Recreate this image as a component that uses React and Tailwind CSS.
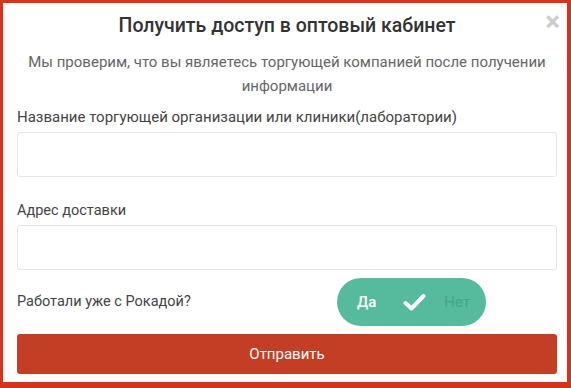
import React, { useState } from 'react';

function App() {
  const [worked, setWorked] = useState(true);

  return (
    <div
      className="w-[571px] h-[388px] bg-[#d8321a] pt-[3px] pl-[3px] pr-[4px] pb-[6px]"
      style={{ fontFamily: 'Roboto, "Liberation Sans", sans-serif' }}
    >
      <div className="relative h-full bg-white pl-[14px] pr-[10px] pt-[9px]">
        <button className="absolute right-[7px] top-[5px] text-[#cdcdcd] text-[28px] leading-none font-bold">
          ×
        </button>
        <h2 className="text-center text-[19.5px] font-medium text-[#333] leading-[28px]">
          Получить доступ в оптовый кабинет
        </h2>
        <p className="mt-[10px] text-center text-[15px] text-[#666] leading-[24px] px-[8px]">
          Мы проверим, что вы являетесь торгующей компанией после получении информации
        </p>
        <form className="mt-[8px]">
          <label className="block text-[15px] text-[#444] leading-[22px]">
            Название торгующей организации или клиники(лаборатории)
          </label>
          <input
            type="text"
            className="mt-[4px] block w-full h-[45px] border border-[#e5e5e5] rounded-[3px]"
          />
          <label className="block mt-[23px] text-[14.5px] text-[#444] leading-[22px]">
            Адрес доставки
          </label>
          <input
            type="text"
            className="mt-[3px] block w-full h-[45px] border border-[#e5e5e5] rounded-[3px]"
          />
          <div className="mt-[8px] flex items-center h-[48px]">
            <span className="w-[320px] text-[14.5px] text-[#444]">Работали уже с Рокадой?</span>
            <button
              type="button"
              onClick={() => setWorked(!worked)}
              className="w-[149px] h-[48px] rounded-full bg-[#56bb9c] flex items-center pl-[20px] text-[15px]"
            >
              <span className="text-white font-medium">Да</span>
              <svg className="ml-[27px]" width="23" height="19" viewBox="0 0 23 19" fill="none">
                <path d="M2.5 10 L8.5 15.5 L20.5 3" stroke="white" strokeWidth="4" strokeLinecap="round" strokeLinejoin="round" />
              </svg>
              <span className="ml-[18px] text-[#46a486]">Нет</span>
            </button>
          </div>
          <button
            type="button"
            className="mt-[8px] w-full h-[40px] rounded-[3px] bg-[#c43d25] text-white text-[15px]"
          >
            Отправить
          </button>
        </form>
      </div>
    </div>
  );
}

export default App;
